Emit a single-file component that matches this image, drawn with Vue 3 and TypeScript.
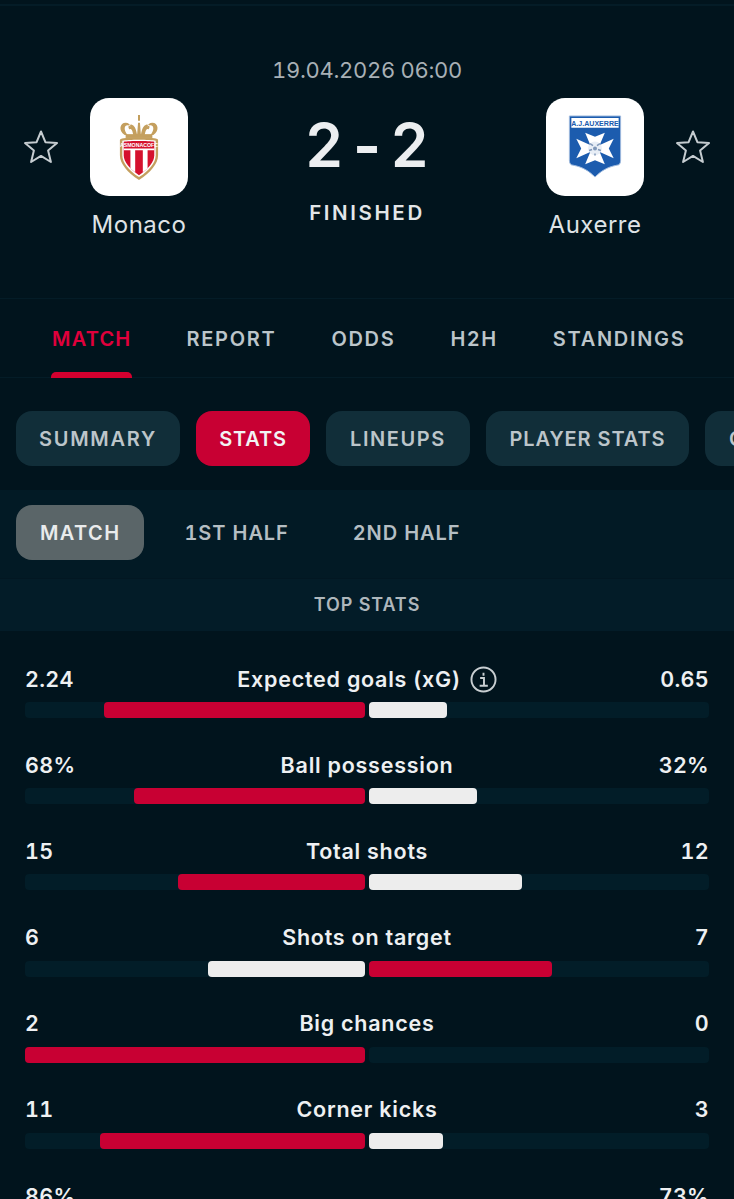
<script setup lang="ts">
interface Stat { label: string; l: string; r: string; lw: number; rw: number; info?: boolean; rightWins?: boolean }
const tabs = ['MATCH', 'REPORT', 'ODDS', 'H2H', 'STANDINGS']
const chips = [
  { t: 'SUMMARY', w: 164, ls: 1.75 },
  { t: 'STATS', w: 114, ls: 0.8 },
  { t: 'LINEUPS', w: 144, ls: 1.6 },
  { t: 'PLAYER STATS', w: 203, ls: 0.9 },
  { t: 'COMMENTARY', w: 210, ls: 1.5 }
]
const periods = ['MATCH', '1ST HALF', '2ND HALF']
const stats: Stat[] = [
  { label: 'Expected goals (xG)', l: '2.24', r: '0.65', lw: 261, rw: 78, info: true },
  { label: 'Ball possession', l: '68%', r: '32%', lw: 231, rw: 108 },
  { label: 'Total shots', l: '15', r: '12', lw: 187, rw: 153 },
  { label: 'Shots on target', l: '6', r: '7', lw: 157, rw: 183, rightWins: true },
  { label: 'Big chances', l: '2', r: '0', lw: 340, rw: 0 },
  { label: 'Corner kicks', l: '11', r: '3', lw: 265, rw: 74 },
  { label: '', l: '86%', r: '73%', lw: 200, rw: 170 }
]
const pct = (w: number) => `${(w / 340) * 100}%`
</script>

<template>
  <div class="page">
    <header class="match">
      <div class="date">19.04.2026 06:00</div>
      <div class="teams">
        <svg class="star" viewBox="0 0 36 36"><path d="M18 2.500 22.400 13.200 34 14.100 25.100 21.600 27.900 33 18 26.900 8.100 33 10.900 21.600 2 14.100 13.600 13.200Z" /></svg>
        <div class="team">
          <div class="logo">
            <svg width="42" height="65" viewBox="0 0 44 68">
              <path d="M22 0v6" stroke="#c09a55" stroke-width="2" />
              <path d="M7 21C0 16 2 8 8 8c3 0 5 2 5 4-2-2-6-2-6 2 0 2 1 4 3 7zM37 21c7-5 5-13-1-13-3 0-5 2-5 4 2-2 6-2 6 2 0 2-1 4-3 7zM20 21c-1-7-3-10-6-11-3 0-4 3-2 5 1-1 3-1 4 6zM24 21c1-7 3-10 6-11 3 0 4 3 2 5-1-1-3-1-4 6zM21 8h2l1 13h-4z" fill="#c49f5e" />
              <path d="M8 20h28v4H8z" fill="#c49f5e" />
              <path d="M3 25C9 23 35 23 41 25c1 .3 1 1 1 2v15c0 9-8 18-20 26C10 60 2 51 2 42V27c0-1 0-1.700 1-2z" fill="#c49f5e" />
              <path d="M4.500 27c6-1.500 29-1.500 35 0v15c0 8-7 16-17.500 23C11.500 58 4.500 50 4.500 42z" fill="#fff" />
              <path d="M6 28c6-1 26-1 32 0v14c0 7-6 14-16 21C12 56 6 49 6 42z" fill="#d5112e" />
              <path d="M6 35h32v2H6zM13 37h5v23l-5-4zM26 37h5v19l-5 4z" fill="#fff" />
              <text x="22" y="33.500" text-anchor="middle" class="crest-mo">ASMONACOFC</text>
            </svg>
          </div>
          <div class="name">Monaco</div>
        </div>
        <div class="centre">
          <div class="score"><span>2</span><span class="dash">-</span><span>2</span></div>
          <div class="status">FINISHED</div>
        </div>
        <div class="team">
          <div class="logo">
            <svg width="54" height="65" viewBox="0 0 54 66">
              <path d="M1 1h52v45c0 3-1 5-4 5-10 2-16 6-22 12-6-6-12-10-22-12-3 0-4-2-4-5z" fill="#1c5cae" stroke="#9db9dc" stroke-width="1" />
              <path d="M3 3h48v10H3z" fill="#fff" />
              <text x="27" y="11" text-anchor="middle" class="crest-aj">A.J.AUXERRE</text>
              <path d="M17 18 27 22 37 18 32 30H22zM17 50 27 46 37 50 32 38H22zM8 24 13 34 8 44 21 38V30zM46 24 41 34 46 44 33 38V30z" fill="#fff" />
              <circle cx="27" cy="34" r="7" fill="#e8eef6" />
              <circle cx="27" cy="34" r="2" fill="#7f97b8" />
              <path d="M22 29l3 2M32 29l-3 2M21 36l3-1M33 36l-3-1M27 41v-2" stroke="#7f97b8" stroke-width="1.500" />
            </svg>
          </div>
          <div class="name">Auxerre</div>
        </div>
        <svg class="star" viewBox="0 0 36 36"><path d="M18 2.500 22.400 13.200 34 14.100 25.100 21.600 27.900 33 18 26.900 8.100 33 10.900 21.600 2 14.100 13.600 13.200Z" /></svg>
      </div>
    </header>

    <nav class="tabs">
      <div v-for="(t, i) in tabs" :key="t" class="tab" :class="{ on: i === 0 }">{{ t }}</div>
    </nav>

    <div class="chips">
      <div
        v-for="(c, i) in chips"
        :key="c.t"
        class="chip"
        :class="{ on: i === 1 }"
        :style="{ width: `${c.w}px`, letterSpacing: `${c.ls}px` }"
      >{{ c.t }}</div>
    </div>

    <div class="periods">
      <div v-for="(p, i) in periods" :key="p" class="period" :class="{ on: i === 0 }">{{ p }}</div>
    </div>

    <div class="band">TOP STATS</div>

    <section class="stats">
      <div v-for="s in stats" :key="s.l" class="row">
        <div class="line">
          <span class="val">{{ s.l }}</span>
          <span class="label">{{ s.label }}
            <svg v-if="s.info" class="info" viewBox="0 0 28 28">
              <circle cx="14" cy="14" r="12.500" />
              <path d="M10.500 12.500h4v7.500M10 20.500h8.500M14 7v3" />
            </svg>
          </span>
          <span class="val">{{ s.r }}</span>
        </div>
        <div class="bars">
          <div class="track left"><div class="fill" :class="s.rightWins ? 'white' : 'red'" :style="{ width: pct(s.lw) }"></div></div>
          <div class="track"><div class="fill" :class="s.rightWins ? 'red' : 'white'" :style="{ width: pct(s.rw) }"></div></div>
        </div>
      </div>
    </section>
  </div>
</template>

<style>
html, body { margin: 0; background: #01141d; }
</style>

<style scoped>
.page {
  width: 734px;
  height: 1199px;
  overflow: hidden;
  background: #01141d;
  color: #eef0f2;
  font-family: Inter, "Liberation Sans", sans-serif;
}
.match {
  height: 298px;
  box-sizing: border-box;
  padding-top: 57px;
  position: relative;
}
.match::before {
  content: "";
  position: absolute;
  top: 4px;
  left: 0;
  right: 0;
  height: 2px;
  background: #041c27;
}
.date {
  text-align: center;
  font-size: 22px;
  line-height: 27px;
  letter-spacing: -0.300px;
  color: #a8b0b5;
  font-variant-numeric: tabular-nums;
}
.teams {
  display: flex;
  align-items: flex-start;
  padding: 14px 23px 0 23px;
}
.star {
  width: 36px;
  height: 36px;
  margin-top: 31px;
  flex: none;
  fill: none;
  stroke: #c5ccd0;
  stroke-width: 2;
  stroke-linejoin: round;
}
.team {
  width: 160px;
  flex: none;
  display: flex;
  flex-direction: column;
  align-items: center;
}
.logo {
  width: 98px;
  height: 98px;
  border-radius: 19px;
  background: #fff;
  display: flex;
  align-items: center;
  justify-content: center;
}
.name {
  margin-top: 14px;
  font-size: 24px;
  line-height: 29px;
  letter-spacing: 0.500px;
  color: #dfe3e6;
}
.centre {
  flex: 1;
  text-align: center;
}
.score {
  display: flex;
  justify-content: center;
  align-items: center;
  gap: 10px;
  height: 72px;
  padding-top: 11px;
  font-size: 60px;
  line-height: 72px;
  font-weight: 600;
  color: #eceef0;
}
.dash { font-weight: 700; }
.status {
  margin-top: 20px;
  font-size: 20.500px;
  line-height: 24px;
  font-weight: 600;
  letter-spacing: 2.600px;
  color: #e3e6e8;
}
.tabs {
  height: 80px;
  box-sizing: border-box;
  border-top: 1px solid #041c27;
  border-bottom: 1px solid #041c27;
  display: flex;
  gap: 55px;
  padding-left: 52px;
}
.tab {
  position: relative;
  line-height: 80px;
  font-size: 20px;
  font-weight: 600;
  letter-spacing: 1.700px;
  color: #bcc5ca;
  height: 78px;
}
.tab.on { color: #e0003c; letter-spacing: 1.200px; }
.tab.on::after {
  content: "";
  position: absolute;
  left: -1px;
  right: -1px;
  bottom: -1px;
  height: 6px;
  border-radius: 5px 5px 0 0;
  background: #d4002f;
}
.chips {
  display: flex;
  gap: 16px;
  padding: 33px 0 24px 16px;
  overflow: hidden;
}
.chip {
  flex: none;
  height: 55px;
  line-height: 56px;
  text-align: center;
  border-radius: 16px;
  background: #112e39;
  font-size: 20px;
  font-weight: 600;
  color: #bcc5ca;
}
.chip.on { background: #c80033; color: #f2f3f4; }
.periods {
  height: 88px;
  box-sizing: border-box;
  background: #021a25;
  display: flex;
  gap: 16px;
  padding: 15px 16px 0;
}
.period {
  height: 55px;
  line-height: 56px;
  padding: 0 24px;
  border-radius: 16px;
  font-size: 20px;
  font-weight: 600;
  letter-spacing: 0.900px;
  color: #b5bec3;
  font-variant-numeric: tabular-nums;
}
.period.on { background: #5a6568; color: #e9ebec; letter-spacing: 1.400px; }
.band {
  height: 53px;
  line-height: 51px;
  box-sizing: border-box;
  background: #031c28;
  border-top: 1px solid #021722;
  text-align: center;
  font-size: 18px;
  font-weight: 600;
  letter-spacing: 0.900px;
  color: #aeb7bc;
}
.stats {
  padding: 29px 25px 0;
}
.row {
  height: 86.100px;
}
.line {
  display: flex;
  justify-content: space-between;
  align-items: center;
  height: 38px;
  font-size: 21.500px;
  line-height: 38px;
  font-weight: 600;
  letter-spacing: 0.750px;
  color: #eef0f2;
}
.val {
  min-width: 60px;
  letter-spacing: 0.300px;
  font-variant-numeric: tabular-nums;
}
.val:last-child { text-align: right; }
.label { display: flex; align-items: center; gap: 9px; }
.info {
  width: 27px;
  height: 27px;
  fill: none;
  stroke: #c8ced1;
  stroke-width: 2;
}
.bars {
  display: flex;
  gap: 4px;
  margin-top: 4.300px;
}
.track {
  flex: 1;
  height: 16px;
  border-radius: 4px;
  background: #021d28;
  display: flex;
}
.track.left { justify-content: flex-end; }
.fill { height: 100%; border-radius: 4px; }
.fill.red { background: #c80033; }
.fill.white { background: #ededed; }
.crest-mo { font: 700 5.500px "Liberation Sans", sans-serif; fill: #fff; }
.crest-aj { font: 700 7.200px "Liberation Sans", sans-serif; fill: #1c5cae; }
</style>
